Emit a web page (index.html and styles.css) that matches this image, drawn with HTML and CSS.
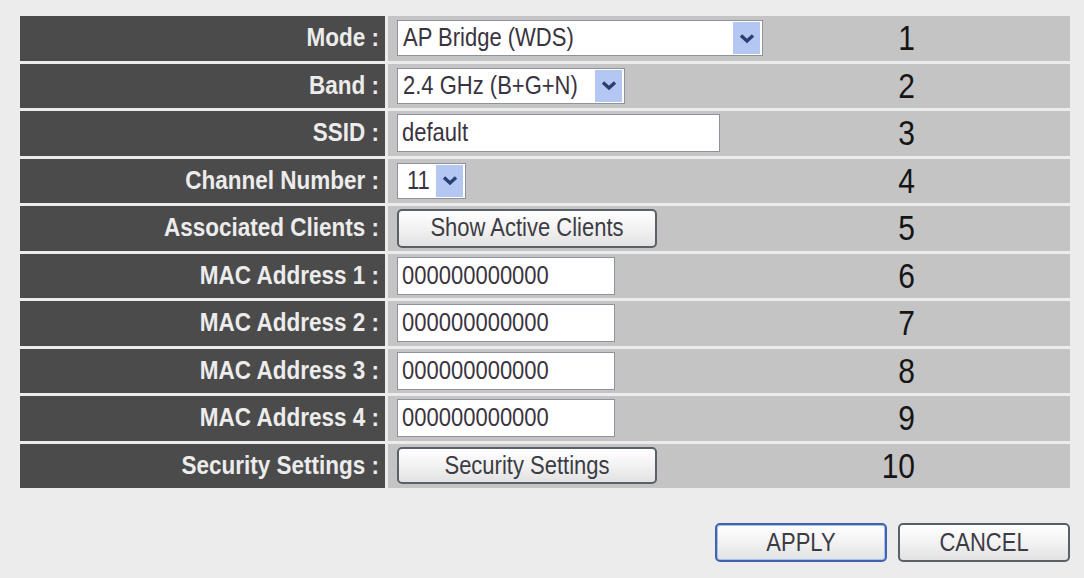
FILE: index.html
```html
<!DOCTYPE html>
<html>
<head>
<meta charset="utf-8">
<link rel="stylesheet" href="styles.css">
</head>
<body>
<div class="page">
  <div class="table">
    <div class="row">
      <div class="label"><span class="t">Mode :</span></div>
      <div class="data">
        <div class="ctl"><div class="select w-mode"><span class="sel-text t">AP Bridge (WDS)</span><span class="arrow"><svg width="16" height="11" viewBox="0 0 16 11"><path d="M2 2.5 L8 8 L14 2.5" fill="none" stroke="#2a3e76" stroke-width="3.4"/></svg></span></div></div>
        <div class="num"><span class="t">1</span></div>
      </div>
    </div>
    <div class="row">
      <div class="label"><span class="t">Band :</span></div>
      <div class="data">
        <div class="ctl"><div class="select w-band"><span class="sel-text t">2.4 GHz (B+G+N)</span><span class="arrow"><svg width="16" height="11" viewBox="0 0 16 11"><path d="M2 2.5 L8 8 L14 2.5" fill="none" stroke="#2a3e76" stroke-width="3.4"/></svg></span></div></div>
        <div class="num"><span class="t">2</span></div>
      </div>
    </div>
    <div class="row">
      <div class="label"><span class="t">SSID :</span></div>
      <div class="data">
        <div class="ctl"><div class="input w-ssid"><span class="t">default</span></div></div>
        <div class="num"><span class="t">3</span></div>
      </div>
    </div>
    <div class="row">
      <div class="label"><span class="t">Channel Number :</span></div>
      <div class="data">
        <div class="ctl"><div class="select w-chan"><span class="sel-text chan-text t">11</span><span class="arrow"><svg width="16" height="11" viewBox="0 0 16 11"><path d="M2 2.5 L8 8 L14 2.5" fill="none" stroke="#2a3e76" stroke-width="3.4"/></svg></span></div></div>
        <div class="num"><span class="t">4</span></div>
      </div>
    </div>
    <div class="row">
      <div class="label"><span class="t">Associated Clients :</span></div>
      <div class="data">
        <div class="ctl"><button class="btn w-wide"><span class="t">Show Active Clients</span></button></div>
        <div class="num"><span class="t">5</span></div>
      </div>
    </div>
    <div class="row">
      <div class="label"><span class="t">MAC Address 1 :</span></div>
      <div class="data">
        <div class="ctl"><div class="input w-mac"><span class="t">000000000000</span></div></div>
        <div class="num"><span class="t">6</span></div>
      </div>
    </div>
    <div class="row">
      <div class="label"><span class="t">MAC Address 2 :</span></div>
      <div class="data">
        <div class="ctl"><div class="input w-mac"><span class="t">000000000000</span></div></div>
        <div class="num"><span class="t">7</span></div>
      </div>
    </div>
    <div class="row">
      <div class="label"><span class="t">MAC Address 3 :</span></div>
      <div class="data">
        <div class="ctl"><div class="input w-mac"><span class="t">000000000000</span></div></div>
        <div class="num"><span class="t">8</span></div>
      </div>
    </div>
    <div class="row">
      <div class="label"><span class="t">MAC Address 4 :</span></div>
      <div class="data">
        <div class="ctl"><div class="input w-mac"><span class="t">000000000000</span></div></div>
        <div class="num"><span class="t">9</span></div>
      </div>
    </div>
    <div class="row">
      <div class="label"><span class="t">Security Settings :</span></div>
      <div class="data">
        <div class="ctl"><button class="btn w-wide short"><span class="t">Security Settings</span></button></div>
        <div class="num"><span class="t">10</span></div>
      </div>
    </div>
  </div>
  <div class="actions">
    <button class="btn w-act primary"><span class="t">APPLY</span></button>
    <button class="btn w-act"><span class="t">CANCEL</span></button>
  </div>
</div>
</body>
</html>
```
FILE: styles.css
```css
html, body {
  margin: 0;
  padding: 0;
}
body {
  background: #ececec;
  font-family: "Liberation Sans", Arial, sans-serif;
  width: 1084px;
  height: 578px;
  overflow: hidden;
}
.page {
  padding: 16px 14px 0 20px;
}
.t {
  display: inline-block;
  transform: scaleY(1.18);
}
.table {
  display: flex;
  flex-direction: column;
  gap: 3px;
  width: 1050px;
}
.row {
  display: grid;
  grid-template-columns: 365px 1fr;
  column-gap: 3px;
  height: 44.5px;
}
.label {
  background: #4b4b4b;
  color: #ececec;
  font-weight: bold;
  font-size: 22.5px;
  display: flex;
  align-items: center;
  justify-content: flex-end;
  padding-right: 6px;
}
.data {
  background: #c4c4c4;
  display: flex;
  align-items: center;
  padding-left: 9px;
}
.ctl {
  flex: 1;
  display: flex;
  align-items: center;
}
.num {
  font-size: 30px;
  color: #151515;
  text-align: right;
  padding-right: 155px;
}
.select {
  box-sizing: border-box;
  height: 36px;
  background: #fff;
  border: 1px solid #8d939c;
  display: flex;
  align-items: center;
  font-size: 22px;
  color: #3a3440;
}
.sel-text {
  margin-left: 5px;
}
.chan-text {
  margin-left: 9px;
}
.arrow {
  width: 27px;
  align-self: stretch;
  margin: 1px 2px 1px auto;
  background: #b3c7f2;
  display: flex;
  align-items: center;
  justify-content: center;
}
.w-mode { width: 366px; }
.w-band { width: 228px; }
.w-chan { width: 69px; }
.input {
  box-sizing: border-box;
  height: 38px;
  background: #fff;
  border: 1px solid #8d939c;
  display: flex;
  align-items: center;
  padding-left: 4px;
  font-size: 22px;
  color: #3a3440;
}
.w-ssid { width: 323px; }
.w-mac { width: 218px; }
.btn {
  box-sizing: border-box;
  height: 39px;
  font-family: "Liberation Sans", Arial, sans-serif;
  font-size: 22px;
  color: #3c3c44;
  background: linear-gradient(#ffffff, #f2f2f2 50%, #e2e2e2);
  border: 2px solid #5a6068;
  border-radius: 5px;
  padding: 0;
  margin: 0;
}
.w-wide { width: 260px; }
.short { height: 37px; }
.actions {
  display: flex;
  justify-content: flex-end;
  gap: 11px;
  width: 1050px;
  margin-top: 35px;
}
.w-act { width: 172px; height: 39px; }
.primary {
  border-color: #3f63ad;
  box-shadow: inset 0 0 0 1px #a9c0ea;
}
```
